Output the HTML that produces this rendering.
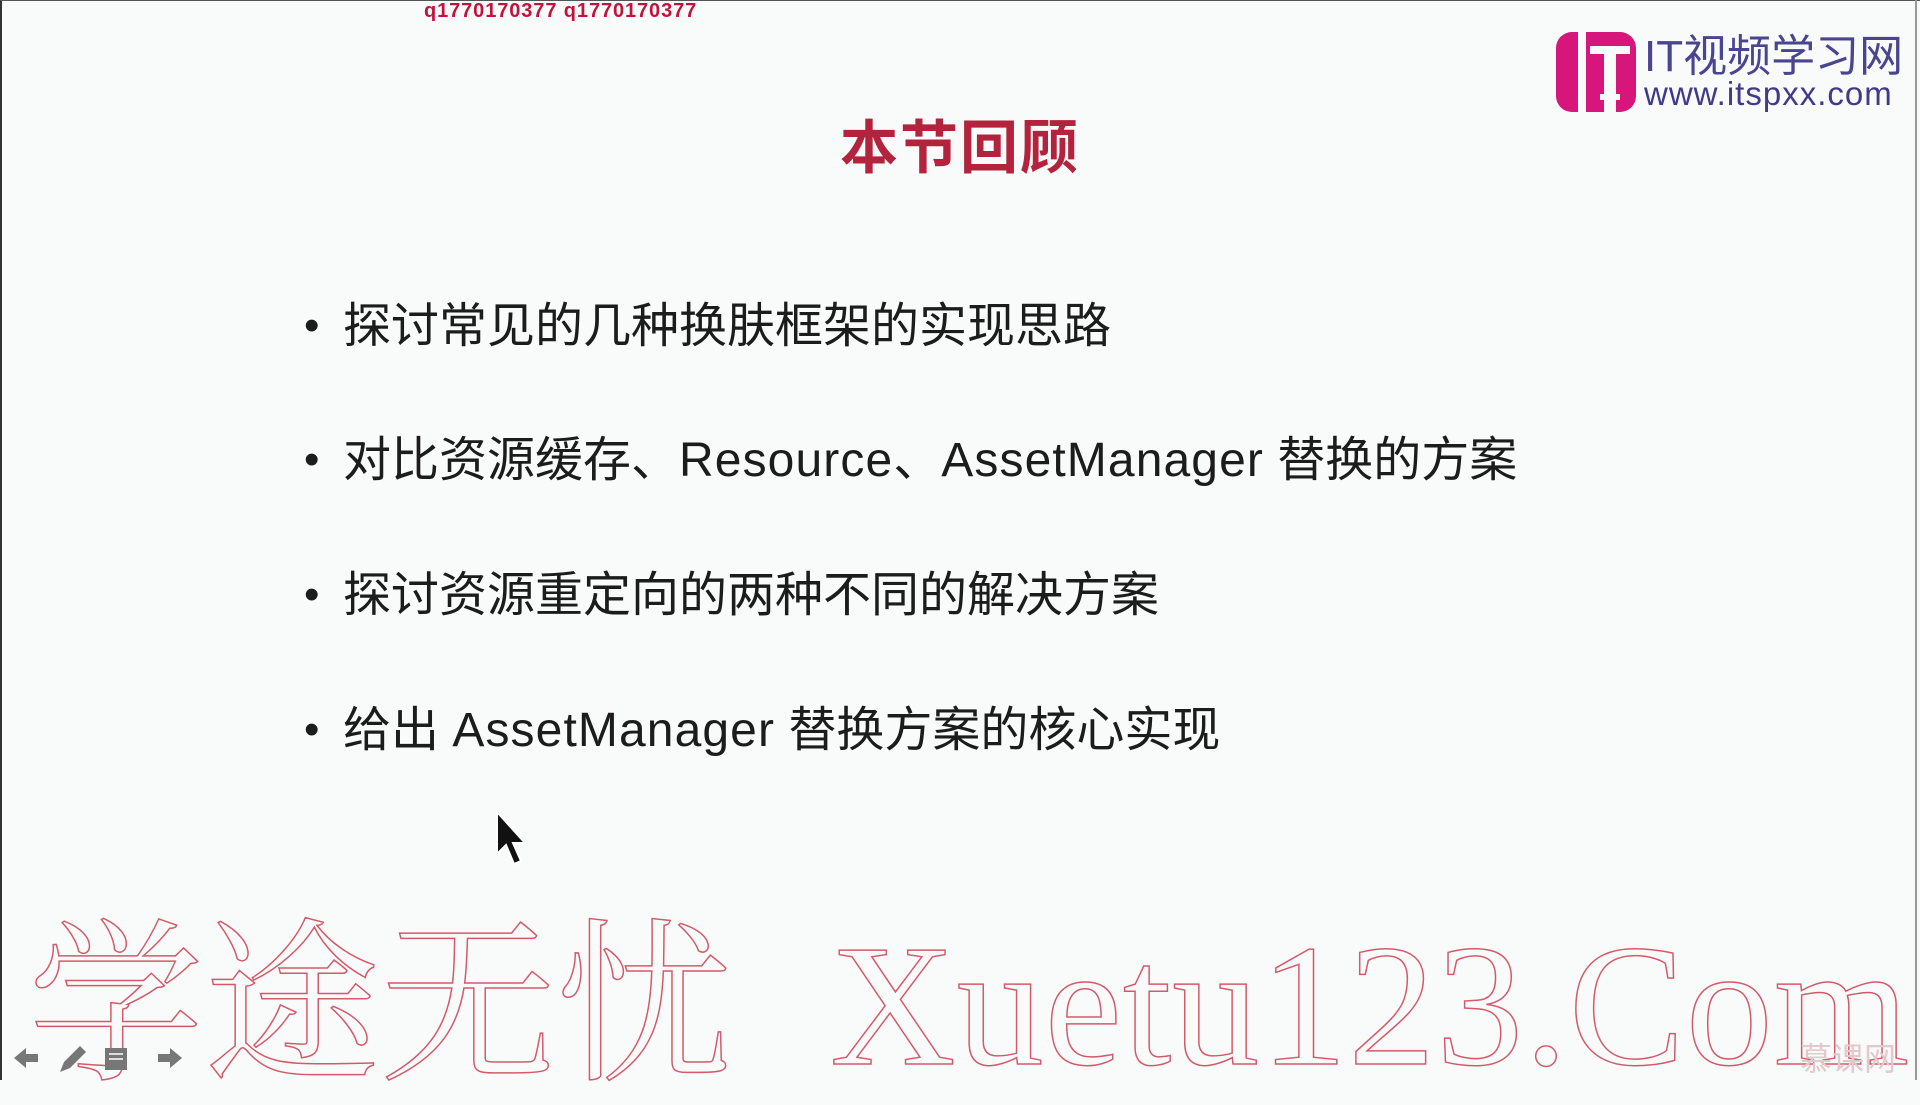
<!DOCTYPE html>
<html><head><meta charset="utf-8"><style>
html,body{margin:0;padding:0}
body{width:1920px;height:1080px;background:#f9fbfa;position:relative;overflow:hidden;font-family:"Liberation Sans","Noto Sans CJK SC",sans-serif}
.abs{position:absolute;white-space:nowrap}
.top{left:424px;top:0px;font-size:20px;font-weight:bold;color:#c0143c;line-height:22px;letter-spacing:0.9px}
.title{left:0;width:1920px;text-align:center;top:114px;font-size:58px;font-weight:bold;color:#b3233d;line-height:70px;letter-spacing:2px}
.b{left:304px;font-size:48px;color:#1c1c1c;line-height:60px}
.b span{display:inline-block;width:39px;font-size:44px;vertical-align:2px}
.b i{font-style:normal;letter-spacing:1.1px}
.wm{font-family:"Liberation Serif","Noto Serif CJK SC",serif;color:transparent;-webkit-text-stroke:1.5px #d35a6a;font-size:176px;line-height:176px}
</style></head><body>
<div style="position:absolute;left:0;top:0;width:2px;height:1080px;background:#333"></div>
<div style="position:absolute;left:0;top:0;width:1920px;height:1px;background:#555"></div>
<div style="position:absolute;right:3px;top:0;width:2px;height:1080px;background:#999"></div>
<div class="abs top">q1770170377 q1770170377</div>
<svg class="abs" style="left:1556px;top:32px" width="80" height="80" viewBox="0 0 80 80">
<rect x="0" y="0" width="80" height="80" rx="16" fill="#d6167a"/>
<rect x="22" y="0" width="8" height="80" fill="#f9fbfa"/>
<rect x="34" y="14" width="40" height="8" fill="#f9fbfa"/>
<rect x="48" y="14" width="12" height="66" fill="#f9fbfa"/>
<rect x="44" y="62" width="20" height="6" fill="#f9fbfa"/>
</svg>
<div class="abs" style="left:1644px;top:32px;font-size:44px;line-height:50px;color:#4a4590">IT视频学习网</div>
<div class="abs" style="left:1644px;top:76px;font-size:33px;line-height:36px;color:#3f3a8a;letter-spacing:1px">www.itspxx.com</div>
<div class="abs title">本节回顾</div>
<div class="abs b" style="top:296px"><span>•</span>探讨常见的几种换肤框架的实现思路</div>
<div class="abs b" style="top:430px"><span>•</span>对比资源缓存、<i>Resource</i>、<i>AssetManager</i> 替换的方案</div>
<div class="abs b" style="top:565px"><span>•</span>探讨资源重定向的两种不同的解决方案</div>
<div class="abs b" style="top:700px"><span>•</span>给出 <i>AssetManager</i> 替换方案的核心实现</div>
<svg class="abs" style="left:495px;top:810px" width="36" height="60" viewBox="0 0 36 60"><path d="M2 2 L2 44 L11 35 L19 54 L26 51 L18 33 L30 33 Z" fill="#111" stroke="#fff" stroke-width="2"/></svg>
<div class="abs wm" style="left:28px;top:920px">学途无忧</div>
<div class="abs wm" style="left:830px;top:918px;font-size:174px;letter-spacing:1px">Xuetu123.Com</div>
<svg class="abs" style="left:10px;top:1040px" width="180" height="36" viewBox="0 0 180 36">
<path d="M4 18 L16 8 L16 14 L28 14 L28 22 L16 22 L16 28 Z" fill="#777"/>
<path d="M50 32 L54 22 L70 6 L76 12 L60 28 Z" fill="#777"/>
<rect x="95" y="8" width="22" height="22" fill="#777"/><rect x="99" y="13" width="14" height="2" fill="#ddd"/><rect x="99" y="18" width="14" height="2" fill="#ddd"/>
<path d="M172 18 L160 8 L160 14 L148 14 L148 22 L160 22 L160 28 Z" fill="#777"/>
</svg>
<div class="abs" style="left:1800px;top:1034px;font-size:32px;color:#e3c9cc">慕课网</div>
</body></html>
